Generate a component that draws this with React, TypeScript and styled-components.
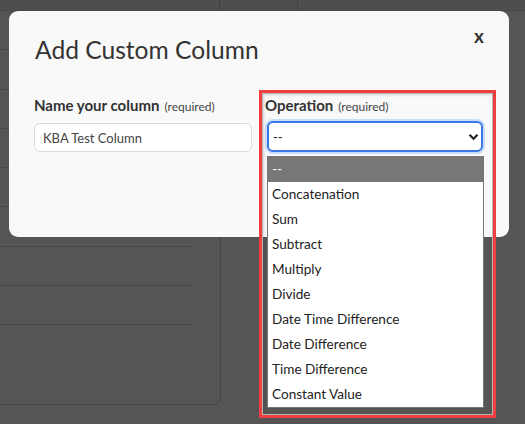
import React from 'react';
import styled, { createGlobalStyle } from 'styled-components';

const GlobalStyle = createGlobalStyle`
  html, body {
    margin: 0;
    padding: 0;
    background: #555555;
    font-family: Lato, "Liberation Sans", sans-serif;
  }
  * { box-sizing: border-box; }
`;

const Page = styled.div`
  position: relative;
  width: 525px;
  height: 424px;
  overflow: hidden;
  background: #555555;
`;

const HeaderBar = styled.div`
  display: flex;
  height: 11px;
  background: #4e4e4e;
  border-bottom: 1px solid #484848;
`;

const HeaderCell = styled.div<{ $w: number }>`
  width: ${(p) => p.$w}px;
  flex: none;
  border-right: 1px solid #404040;
`;

const Card = styled.div`
  width: 221px;
  height: 394px;
  border-right: 1px solid #474747;
  border-bottom: 1px solid #474747;
  border-bottom-right-radius: 8px;
  padding-right: 26px;
`;

const Row = styled.div`
  height: 39.3px;
  border-bottom: 1px solid #474747;
`;

const Modal = styled.div`
  position: absolute;
  left: 9px;
  top: 11px;
  width: 500px;
  height: 226px;
  background: #f9f9f9;
  border-radius: 9px;
  padding: 24px 25px 0 25px;
  color: #333;
`;

const TitleRow = styled.div`
  display: flex;
  justify-content: space-between;
  align-items: flex-start;
`;

const Title = styled.h2`
  margin: 0 0 0 1px;
  font-size: 24.6px;
  font-weight: 400;
  line-height: 30px;
  color: #333;
`;

const Close = styled.button`
  border: none;
  background: none;
  padding: 0;
  margin-top: -11px;
  font-family: inherit;
  font-size: 19px;
  font-weight: 700;
  color: #333;
  cursor: pointer;
`;

const Fields = styled.div`
  display: grid;
  grid-template-columns: 218px 218px;
  column-gap: 13px;
  margin-top: 31px;
`;

const Field = styled.div`
  position: relative;
  display: flex;
  flex-direction: column;
`;

const Label = styled.label`
  font-size: 15px;
  font-weight: 700;
  line-height: 18px;
  color: #333;
  margin-bottom: 7px;
`;

const Hint = styled.span`
  font-size: 12px;
  font-weight: 400;
  margin-left: 5px;
  color: #444;
`;

const TextInput = styled.input`
  height: 29px;
  border: 1px solid #dcdcdc;
  border-radius: 6px;
  background: #fff;
  padding: 0 8px;
  font-family: inherit;
  font-size: 13px;
  color: #444;
  outline: none;
`;

const SelectBox = styled.div`
  position: relative;
  height: 31px;
  margin-top: -2px;
  margin-left: 2px;
  border: 2px solid #3b78e7;
  border-radius: 6px;
  background: #fff;
  box-shadow: 0 0 0 2px #c9dcfb;
  display: flex;
  align-items: center;
  justify-content: space-between;
  padding: 0 2px 0 4px;
  font-size: 13px;
  color: #222;
`;

const OptionList = styled.ul`
  position: absolute;
  left: 267px;
  top: 156px;
  width: 217px;
  margin: 0;
  padding: 0;
  list-style: none;
  background: #fff;
  border: 1px solid #767676;
  z-index: 2;
`;

const Option = styled.li<{ $active?: boolean }>`
  height: 25px;
  line-height: 25px;
  padding: 0 4px;
  font-size: 13.6px;
  background: ${(p) => (p.$active ? '#777777' : '#fff')};
  color: ${(p) => (p.$active ? '#fff' : '#222')};
`;

const Highlight = styled.div`
  position: absolute;
  left: 259px;
  top: 90px;
  width: 237px;
  height: 328px;
  border: 3px solid #ee4040;
  box-shadow: inset 0 0 0 1px #b8b8b8, inset 2px 2px 3px rgba(0, 0, 0, 0.15);
  pointer-events: none;
  z-index: 3;
`;

const options = [
  '--',
  'Concatenation',
  'Sum',
  'Subtract',
  'Multiply',
  'Divide',
  'Date Time Difference',
  'Date Difference',
  'Time Difference',
  'Constant Value',
];

const Chevron = () => (
  <svg width="11" height="8" viewBox="0 0 11 8">
    <path d="M1.5 1.8 L5.5 5.8 L9.5 1.8" fill="none" stroke="#222" strokeWidth="2.2" />
  </svg>
);

export default function App() {
  return (
    <>
      <GlobalStyle />
      <Page>
        <HeaderBar>
          <HeaderCell $w={220} />
          <HeaderCell $w={78} />
        </HeaderBar>
        <Card>
          {Array.from({ length: 8 }).map((_, i) => (
            <Row key={i} />
          ))}
        </Card>

        <Modal>
          <TitleRow>
            <Title>Add Custom Column</Title>
            <Close>x</Close>
          </TitleRow>
          <Fields>
            <Field>
              <Label>
                Name your column<Hint>(required)</Hint>
              </Label>
              <TextInput defaultValue="KBA Test Column" />
            </Field>
            <Field>
              <Label>
                Operation<Hint>(required)</Hint>
              </Label>
              <SelectBox>
                <span>--</span>
                <Chevron />
              </SelectBox>
            </Field>
          </Fields>
        </Modal>

        <OptionList>
          {options.map((o, i) => (
            <Option key={o} $active={i === 0}>
              {o}
            </Option>
          ))}
        </OptionList>

        <Highlight />
      </Page>
    </>
  );
}
